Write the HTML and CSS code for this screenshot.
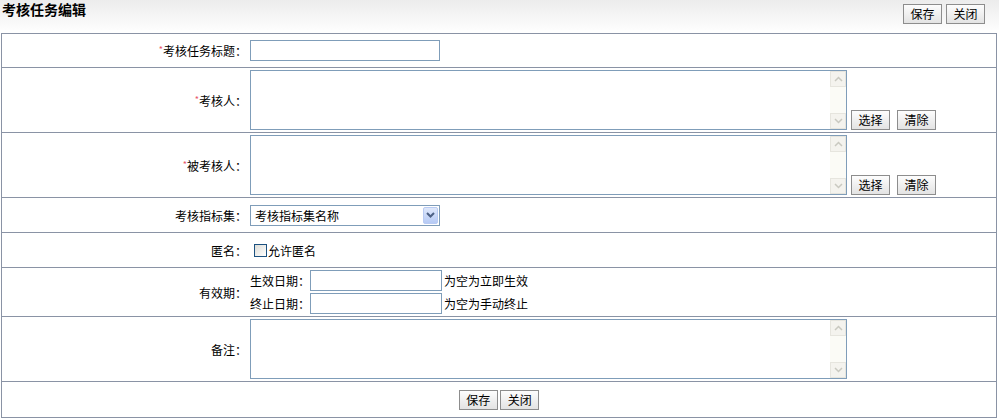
FILE: index.html
```html
<!DOCTYPE html>
<html lang="zh-CN">
  <head>
    <meta charset="UTF-8" />
    <title>考核任务编辑</title>
    <link rel="stylesheet" href="styles.css">
  </head>
  <body>
    <div class="page-head">
      <h1>考核任务编辑</h1>
      <div class="head-btns">
        <button class="btn">保存</button>
        <button class="btn">关闭</button>
      </div>
    </div>
    <table class="edit-table">
      <tr class="row-34">
        <td class="label"><span class="req">*</span>考核任务标题：</td>
        <td class="value"><input type="text" class="txt" /></td>
      </tr>
      <tr class="row-65">
        <td class="label"><span class="req">*</span>考核人：</td>
        <td class="value">
          <div class="area-line">
            <div class="area">
              <textarea></textarea>
              <div class="fake-scroll">
                <span class="arrow"><svg width="9" height="6" viewBox="0 0 9 6"><path d="M1 5 L4.5 1.5 L8 5" fill="none" stroke="#c9c9c0" stroke-width="1.5"/></svg></span>
                <span class="arrow"><svg width="9" height="6" viewBox="0 0 9 6"><path d="M1 1 L4.5 4.5 L8 1" fill="none" stroke="#c9c9c0" stroke-width="1.5"/></svg></span>
              </div>
            </div>
            <button class="btn">选择</button>
            <button class="btn">清除</button>
          </div>
        </td>
      </tr>
      <tr class="row-65">
        <td class="label"><span class="req">*</span>被考核人：</td>
        <td class="value">
          <div class="area-line">
            <div class="area">
              <textarea></textarea>
              <div class="fake-scroll">
                <span class="arrow"><svg width="9" height="6" viewBox="0 0 9 6"><path d="M1 5 L4.5 1.5 L8 5" fill="none" stroke="#c9c9c0" stroke-width="1.5"/></svg></span>
                <span class="arrow"><svg width="9" height="6" viewBox="0 0 9 6"><path d="M1 1 L4.5 4.5 L8 1" fill="none" stroke="#c9c9c0" stroke-width="1.5"/></svg></span>
              </div>
            </div>
            <button class="btn">选择</button>
            <button class="btn">清除</button>
          </div>
        </td>
      </tr>
      <tr class="row-35">
        <td class="label">考核指标集：</td>
        <td class="value">
          <div class="select">
            <span>考核指标集名称</span>
            <span class="drop"><svg width="9" height="6" viewBox="0 0 9 6"><path d="M1 1 L4.5 4.5 L8 1" fill="none" stroke="#4d6185" stroke-width="2"/></svg></span>
          </div>
        </td>
      </tr>
      <tr class="row-35">
        <td class="label">匿名：</td>
        <td class="value"><label class="check"><span class="box"></span>允许匿名</label></td>
      </tr>
      <tr class="row-49">
        <td class="label">有效期：</td>
        <td class="value">
          <div class="date-line">生效日期：<input type="text" class="txt date" />为空为立即生效</div>
          <div class="date-line">终止日期：<input type="text" class="txt date" />为空为手动终止</div>
        </td>
      </tr>
      <tr class="row-65">
        <td class="label">备注：</td>
        <td class="value">
          <div class="area">
            <textarea></textarea>
            <div class="fake-scroll">
              <span class="arrow"><svg width="9" height="6" viewBox="0 0 9 6"><path d="M1 5 L4.5 1.5 L8 5" fill="none" stroke="#c9c9c0" stroke-width="1.5"/></svg></span>
              <span class="arrow"><svg width="9" height="6" viewBox="0 0 9 6"><path d="M1 1 L4.5 4.5 L8 1" fill="none" stroke="#c9c9c0" stroke-width="1.5"/></svg></span>
            </div>
          </div>
        </td>
      </tr>
      <tr class="row-36">
        <td colspan="2" class="foot">
          <button class="btn">保存</button>
          <button class="btn">关闭</button>
        </td>
      </tr>
    </table>
  </body>
</html>
```

FILE: styles.css
```css
body {
  margin: 0;
  font-family: "Noto Sans CJK SC", "Liberation Sans", sans-serif;
  font-size: 12px;
  color: #000;
  background-color: #fff;
}
.page-head {
  height: 30px;
  display: flex;
  justify-content: space-between;
  align-items: flex-start;
  background: linear-gradient(to bottom, #ececec, #fdfdfd);
  padding: 0 14px 0 2px;
  margin-bottom: 3px;
}
.page-head h1 {
  margin: 0;
  font-size: 14px;
  font-weight: bold;
  line-height: 18px;
  padding-top: 0;
}
.head-btns {
  display: flex;
  gap: 4px;
  padding-top: 4px;
}
.btn {
  height: 20px;
  width: 39px;
  padding: 0;
  font-family: inherit;
  font-size: 12px;
  line-height: 18px;
  color: #000;
  border: 1px solid #8d8d8d;
  border-radius: 0;
  background: linear-gradient(to bottom, #fdfdfd, #e3e3e3);
}
.edit-table {
  width: 996px;
  margin-left: 1px;
  border-collapse: collapse;
  border: 1px solid #8a93a5;
}
.edit-table td {
  border-top: 1px solid #8a93a5;
  border-bottom: 1px solid #8a93a5;
  padding: 0;
}
.row-34 { height: 34px; }
.row-35 { height: 35px; }
.row-36 { height: 36px; }
.row-49 { height: 49px; }
.row-65 { height: 65px; }
.label {
  width: 245px;
  text-align: right;
  padding-right: 2px !important;
  white-space: nowrap;
}
.value {
  padding-left: 1px !important;
}
.req {
  color: #e8566a;
  font-size: 9px;
  vertical-align: 3px;
}
.txt {
  box-sizing: border-box;
  width: 190px;
  height: 21px;
  border: 1px solid #7f9db9;
  margin: 0;
  padding: 0 2px;
  vertical-align: middle;
}
.area-line {
  display: flex;
  align-items: flex-end;
  gap: 4px;
}
.area-line .btn + .btn {
  margin-left: 3px;
}
.area {
  box-sizing: border-box;
  width: 597px;
  height: 60px;
  border: 1px solid #7f9db9;
  display: flex;
}
.area textarea {
  flex: 1;
  border: none;
  resize: none;
  margin: 0;
  padding: 2px;
  outline: none;
}
.fake-scroll {
  width: 16px;
  background-color: #fbfbf6;
  display: flex;
  flex-direction: column;
  justify-content: space-between;
}
.arrow {
  box-sizing: border-box;
  height: 16px;
  display: flex;
  align-items: center;
  justify-content: center;
  background-color: #f4f3ee;
  border: 1px solid #e6e5de;
}
.select {
  box-sizing: border-box;
  width: 190px;
  height: 21px;
  border: 1px solid #7f9db9;
  display: flex;
  align-items: center;
  justify-content: space-between;
  padding-left: 4px;
}
.drop {
  box-sizing: border-box;
  width: 15px;
  height: 17px;
  margin-right: 1px;
  display: flex;
  align-items: center;
  justify-content: center;
  background: linear-gradient(to bottom, #dfe8fb, #b6caf5);
  border: 1px solid #b9cbf3;
  border-radius: 2px;
}
.check {
  display: flex;
  align-items: center;
  padding-left: 4px;
}
.box {
  box-sizing: border-box;
  width: 13px;
  height: 13px;
  border: 1px solid #1c5180;
  background: linear-gradient(135deg, #dcdcd7, #fff);
  margin-right: 1px;
}
.date-line {
  display: flex;
  align-items: center;
  height: 23px;
}
.txt.date {
  width: 132px;
  margin-right: 2px;
}
.foot {
  text-align: center;
}
.foot .btn + .btn {
  margin-left: 0;
}
```
